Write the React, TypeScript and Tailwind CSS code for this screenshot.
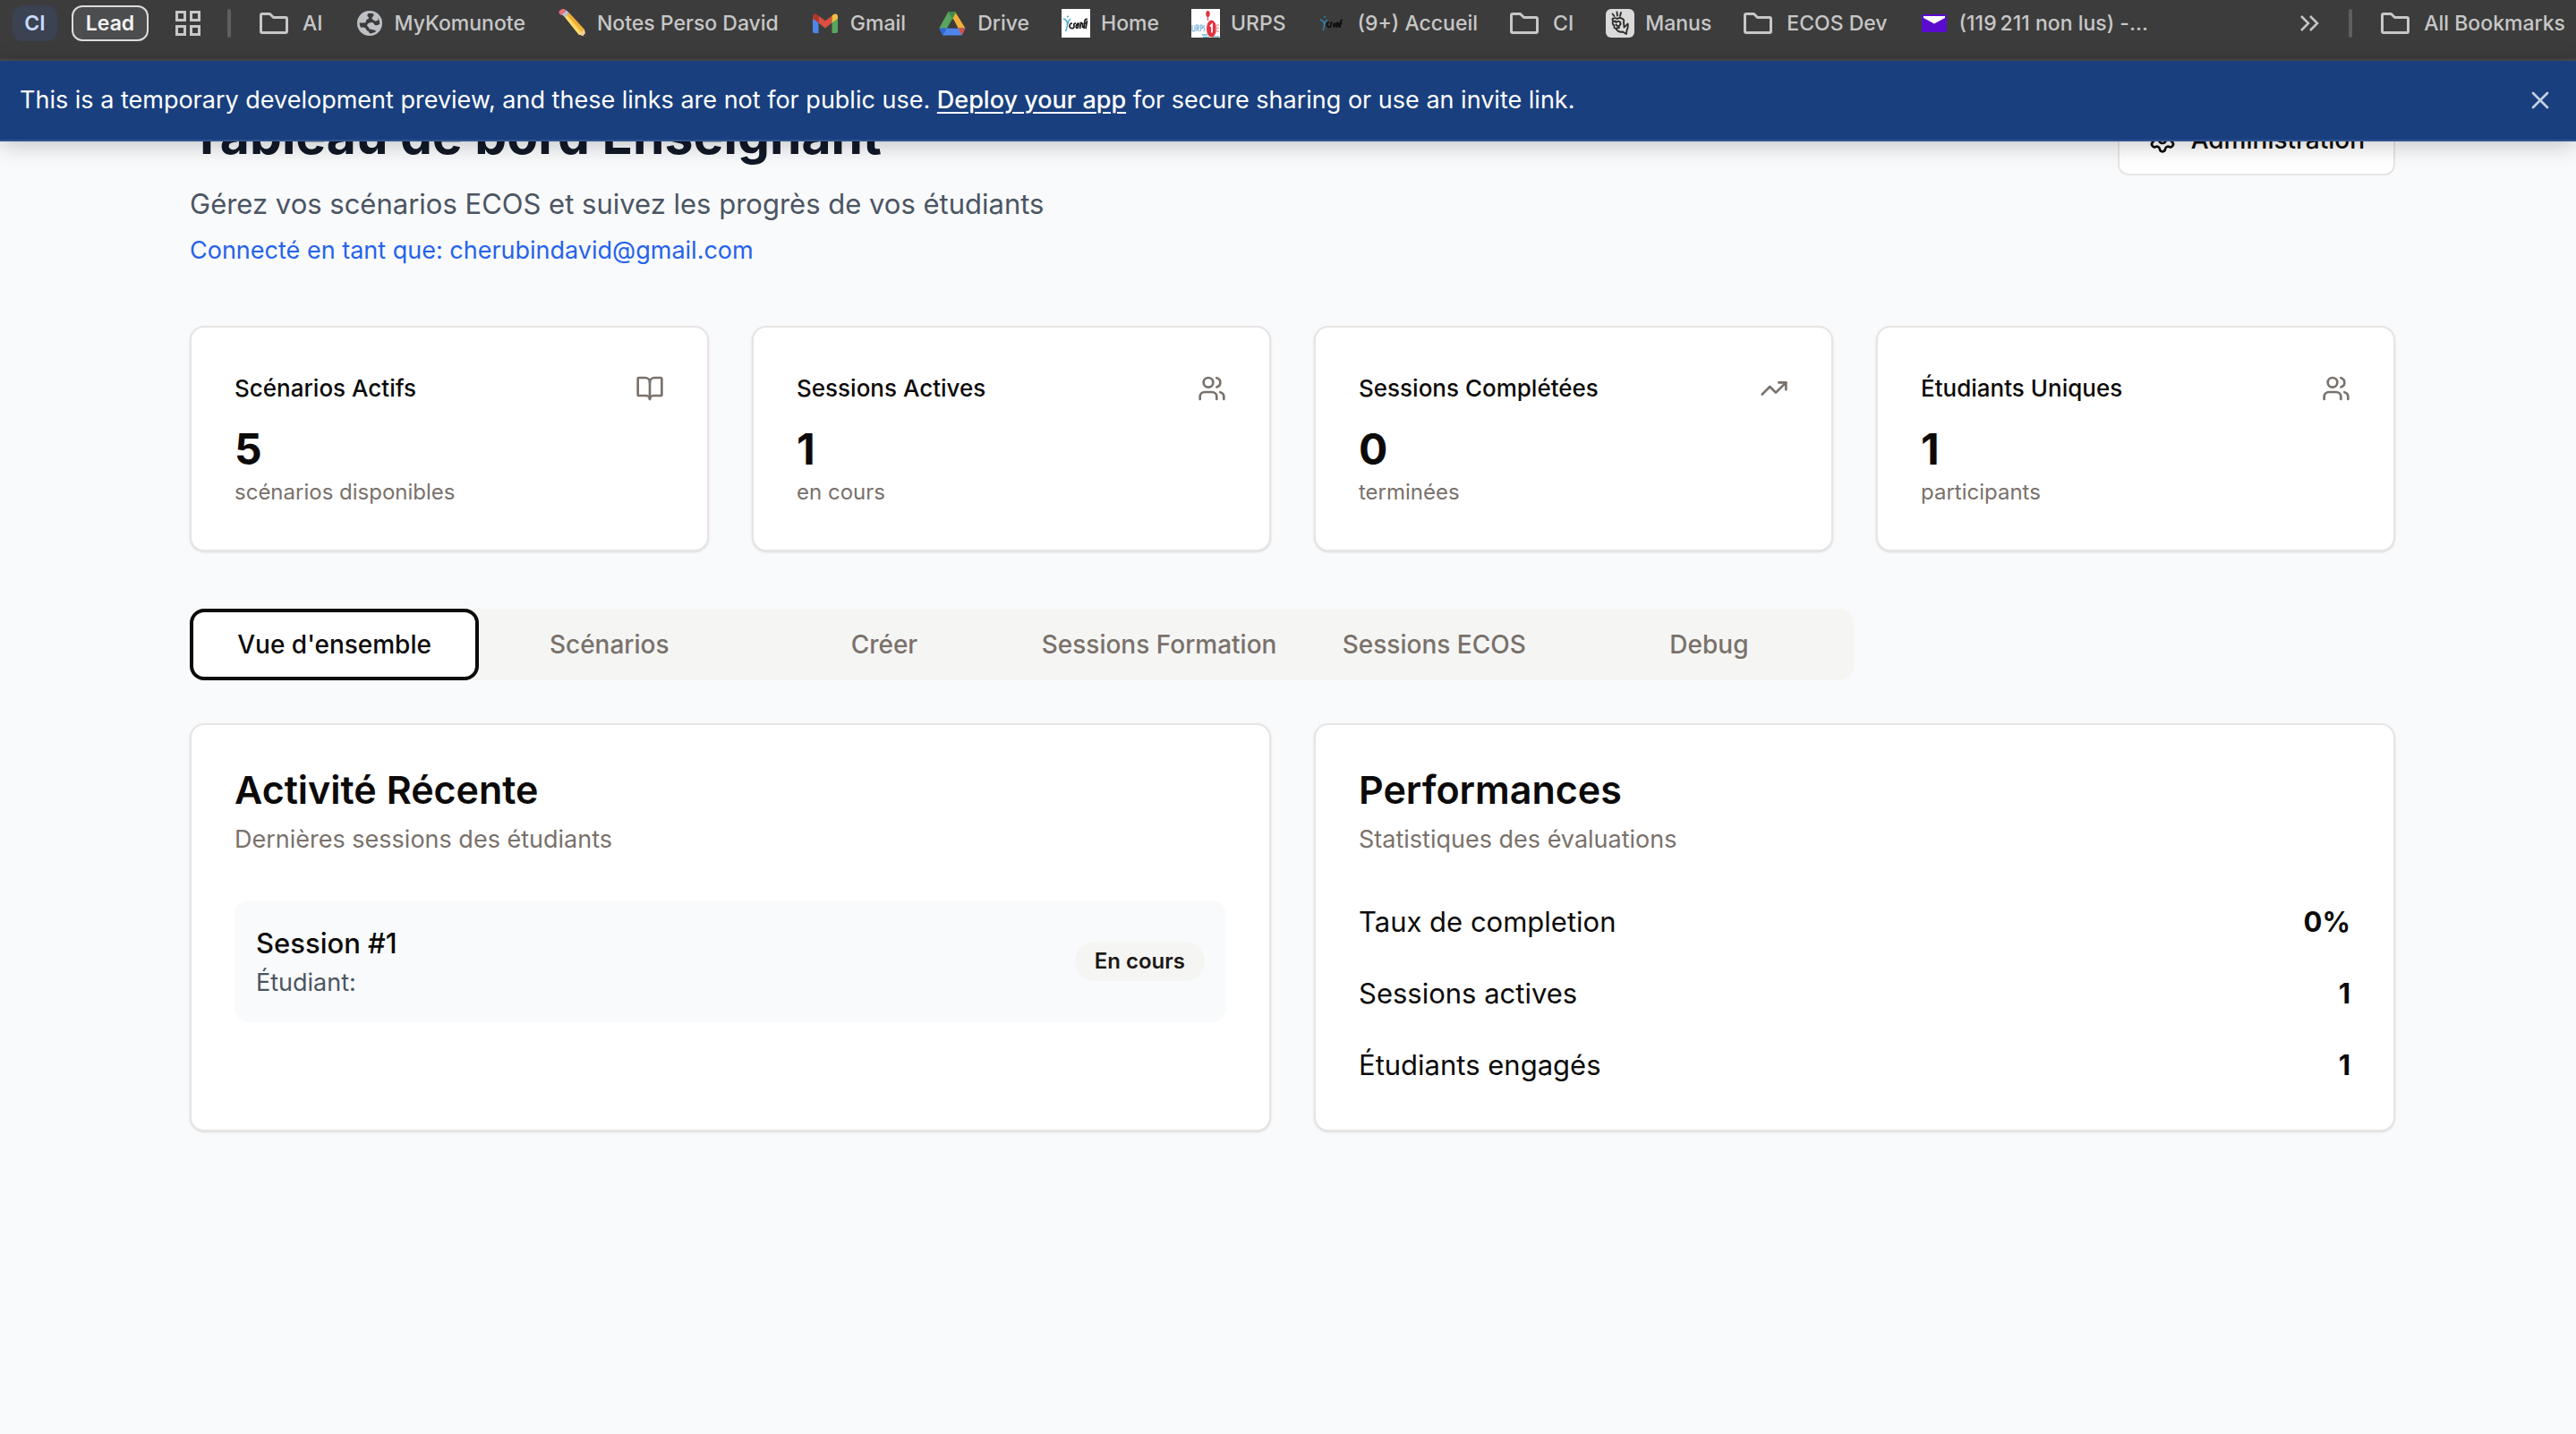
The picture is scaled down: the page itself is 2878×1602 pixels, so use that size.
import type { ReactNode } from "react";
import { BookOpen, Settings, TrendingUp, Users, X } from "lucide-react";

const folderIcon = (
  <svg viewBox="0 0 32 32" className="size-8" fill="none" stroke="#c7c7c7" strokeWidth="3" strokeLinejoin="round" aria-hidden="true">
    <path d="M3 5.500H11.500L15.500 9.500H29Q30.500 9.500 30.500 11V25Q30.500 26.500 29 26.500H3Q1.500 26.500 1.500 25V7Q1.500 5.500 3 5.500Z" />
  </svg>
);

const globeIcon = (
  <svg viewBox="0 0 32 32" className="size-8" aria-hidden="true">
    <circle cx="16" cy="16" r="14" fill="#bdc1c6" />
    <path d="M14.500 5Q12.500 7 14 8.500Q16 10 14 11.500Q11.500 12 12 14Q11.500 16 8.500 15.500H4.600Q4.500 18 6 20.800Q9 20 11.500 21.500Q12 24 14.500 24.800Q15.500 27.500 17 27.400Q21 27.200 23.500 24.800Q22 23.500 19 23Q15 23 14.500 20Q12 18.500 14 16.500Q17 14 20 15.500Q21 18.500 24 18.300Q26 18 27.400 16.500Q27.300 13 25.500 10.300Q23 12.500 20.500 12Q17.500 11.500 19 9Q21 8 20.500 5.500Q17.500 4.200 14.500 5Z" fill="#3c3c3c" />
    <path d="M21 7Q24.500 8.500 26 12Q23 14.500 20.500 12.500Q18.500 10.500 21 7Z" fill="#bdc1c6" />
  </svg>
);

const pencilIcon = (
  <svg viewBox="0 0 32 32" className="size-8" aria-hidden="true">
    <path d="M8 9 13 4.500 30 23 30.500 30.500 23.500 28.500Z" fill="#f6c443" />
    <path d="M10.500 6.800 13 4.500 30 23 27.500 25Z" fill="#e79b2e" opacity=".55" />
    <path d="M8 9 10 7.200 26 26.500 23.500 28.500Z" fill="#fbdc6b" />
    <path d="M23.500 28.500 30 23 31.500 31Z" fill="#f0cfa0" />
    <path d="M28.500 29.800 31 27.500 31.500 31.500Z" fill="#2b2b2b" />
    <path d="M4.500 6 9.500 1.200 13 4.500 8 9.200Z" fill="#b9c4cc" />
    <path d="M1.500 4.500Q1 2.500 3.500 1Q6-.8 8 .5L9.500 2 4.500 7Q2.500 6.500 1.500 4.500Z" fill="#e8707c" />
  </svg>
);

const gmailIcon = (
  <svg viewBox="0 0 32 32" className="size-8" aria-hidden="true">
    <path d="M2 10V25Q2 27 4 27H8.500V14Z" fill="#4f86ec" />
    <path d="M30 10V25Q30 27 28 27H23.500V14Z" fill="#58a55c" />
    <path d="M8.500 7.500 16 13.300 23.500 7.500V15.500L16 21.500 8.500 15.500Z" fill="#d95040" />
    <path d="M2 8.500Q2 5.500 5 5.500Q6.300 5.500 8.500 7.500V15.500L2 10.800Z" fill="#b5362a" />
    <path d="M30 8.500Q30 5.500 27 5.500Q25.700 5.500 23.500 7.500V15.500L30 10.800Z" fill="#f2be42" />
  </svg>
);

const driveIcon = (
  <svg viewBox="0 0 32 32" className="size-8" aria-hidden="true">
    <path d="M11.500 3H16L18.500 8.500 7 30 1.500 21Z" fill="#58a55c" />
    <path d="M13 3H19L30.500 21.500H22.500Z" fill="#f1b13b" />
    <path d="M11.500 3H20.500L16 11Z" fill="#3f8b4c" />
    <path d="M1.500 21.500H30.500L27 29Q26.500 29.500 25.500 29.500H6.500Q5.500 29.500 5 29Z" fill="#4f86ec" />
    <path d="M1.500 21.500H10L5.500 29.500Z" fill="#3267d3" />
    <path d="M22.500 21.500H30.500L26.500 29.500Z" fill="#d95040" />
    <path d="M16 11 22 21.500H10Z" fill="#3c3c3c" />
  </svg>
);

const homeIcon = (
  <svg viewBox="0 0 32 32" className="size-8" aria-hidden="true">
    <path d="M0 0H32V32H0Z" fill="#fff" />
    <path d="M2 11Q6 12 6.500 16Q7 20 4.500 25M10 11Q7.500 13 6.800 17" stroke="#3f9fd8" strokeWidth="1.400" fill="none" />
    <circle cx="7" cy="8.500" r="1" fill="#3f9fd8" />
    <path d="M12 16Q9 16 9 19Q9 22 12.500 21.500M16 16Q13 16 14 19Q14 22 11.800 21.500M17 17Q15 22 18 21Q19.500 18 19 16Q17 16 17 19M20.500 22 21.500 15.500Q24 15 23.500 21M25 22 26 13Q26.500 11 29 11.500M24.500 16H28M27 22 28.500 13" stroke="#1c1c1c" strokeWidth="1.700" fill="none" />
  </svg>
);

const urpsIcon = (
  <svg viewBox="0 0 32 32" className="size-8" aria-hidden="true">
    <path d="M0 0H32V32H0Z" fill="#fff" />
    <path d="M1 18V24Q3 26 4 24V18M6 25V18Q9 18 8.500 21H6.500L9 25M10.500 25V18Q13 18 12.500 21.500H10.500M15 18Q12.500 20 14.500 21.500Q16 24 13.500 25" stroke="#8dbbe0" strokeWidth="1.300" fill="none" />
    <path d="M12 29H18M13 31.500H20M23 31H31" stroke="#6fb7c6" strokeWidth="1.600" />
    <ellipse cx="18.500" cy="5.500" rx="2.200" ry="3.500" fill="#dc3340" />
    <path d="M18.500 9V13" stroke="#dc3340" />
    <ellipse cx="22.500" cy="22" rx="5.500" ry="9.500" fill="#e4323f" />
    <path d="M21 19.500 23 17.500V26.500" stroke="#fff" strokeWidth="1.800" fill="none" />
    <path d="M28 18H31M28 21.500H31M28 25H31M28 18V25" stroke="#efa7a9" strokeWidth="1.400" fill="none" />
  </svg>
);

const accueilIcon = (
  <svg viewBox="0 0 32 32" className="size-8" aria-hidden="true">
    <path d="M2 12Q6 13 6.500 17Q7 20 5 24M10 12Q7.500 14 6.800 17M7 8V10" stroke="#3585b5" strokeWidth="1.400" fill="none" />
    <path d="M12 15Q9 15 9.500 18Q10 20.500 12.500 20M16 15Q13 15 14 17.500Q14 20.500 12 20M17.500 16Q16 20 18 20Q19.500 18 19 15.500M20.500 21 21 15.500Q23 15 22.500 20M24 21 25 13.500Q25.500 12 27 12.500M23.500 16H26.500" stroke="#0e0e0e" strokeWidth="1.700" fill="none" />
  </svg>
);

const manusIcon = (
  <svg viewBox="0 0 32 32" className="size-8" aria-hidden="true">
    <rect width="32" height="32" rx="6" fill="#dadada" />
    <g stroke="#2e2e2a" strokeWidth="1.900" fill="none" strokeLinecap="round" strokeLinejoin="round">
      <path d="M7.500 5.500 9.500 8M12.500 3.500 13 7.500M17 4 16 8" />
      <path d="M8 13Q6.500 10.500 9 10.500Q11 9.500 13 11Q16 9 18.500 11Q21 11.500 20 15.500Q20.500 18 20.500 20.500Q23.500 18 24.500 16.500Q25.500 19 23.500 24L23 28 19 25.500Q14 26.500 11.500 22Q8.500 21.500 9.500 18.500Q7 17.500 8 13Z" />
      <path d="M11.500 15Q14 13 16 14.500Q17.500 17 15 19Q12.500 19.500 11.500 17.500M9.500 14 11 13.500M12 21.500 15 21" />
    </g>
  </svg>
);

const mailIcon = (
  <svg viewBox="0 0 32 32" className="size-8" aria-hidden="true">
    <rect x="2" y="6" width="28" height="20" rx="1" fill="#5b0bce" />
    <path d="M4 8H28V10L16 16.500 4 10Z" fill="#fff" />
  </svg>
);

const bookmarks: { label: string; icon: ReactNode; folder?: boolean }[] = [
  { label: "AI", icon: folderIcon, folder: true },
  { label: "MyKomunote", icon: globeIcon },
  { label: "Notes Perso David", icon: pencilIcon },
  { label: "Gmail", icon: gmailIcon },
  { label: "Drive", icon: driveIcon },
  { label: "Home", icon: homeIcon },
  { label: "URPS", icon: urpsIcon },
  { label: "(9+) Accueil", icon: accueilIcon },
  { label: "CI", icon: folderIcon, folder: true },
  { label: "Manus", icon: manusIcon },
  { label: "ECOS Dev", icon: folderIcon, folder: true },
  { label: "(119\u2009211 non lus) -...", icon: mailIcon },
];

const stats = [
  { label: "Scénarios Actifs", value: "5", note: "scénarios disponibles", Icon: BookOpen },
  { label: "Sessions Actives", value: "1", note: "en cours", Icon: Users },
  { label: "Sessions Complétées", value: "0", note: "terminées", Icon: TrendingUp },
  { label: "Étudiants Uniques", value: "1", note: "participants", Icon: Users },
];

const tabs = ["Vue d'ensemble", "Scénarios", "Créer", "Sessions Formation", "Sessions ECOS", "Debug"];

const performances = [
  { label: "Taux de completion", value: "0%" },
  { label: "Sessions actives", value: "1" },
  { label: "Étudiants engagés", value: "1" },
];

function Bookmark({ label, icon, folder }: { label: string; icon: ReactNode; folder?: boolean }) {
  return (
    <a href="#" className={folder ? "flex shrink-0 items-center gap-4" : "flex shrink-0 items-center gap-3"}>
      {icon}
      <span>{label}</span>
    </a>
  );
}

function BookmarkBar() {
  return (
    <nav aria-label="Bookmarks" className="flex h-[68px] items-start border-b-2 border-[#4a4a4a] bg-[#3c3c3c] pt-1.5 pr-3 pl-3.5 text-[23px] font-medium whitespace-nowrap text-[#c7c7c7]">
      <div className="flex h-10 w-full items-center">
        <button type="button" className="h-10 w-[50px] rounded-xl bg-[#3b4252] font-semibold text-[#c9d9fb]">CI</button>
        <button type="button" className="ml-4 h-10 w-[86px] rounded-xl border-2 border-[#dcdcdc] bg-[#4c4d4f] font-semibold text-[#f3f3f3]">Lead</button>
        <button type="button" aria-label="Apps" className="ml-7">
          <svg viewBox="0 0 32 32" className="size-8" fill="none" stroke="#c7c7c7" strokeWidth="3" aria-hidden="true">
            <path d="M3.500 3.500H12.500V12.500H3.500ZM19.500 3.500H28.500V12.500H19.500ZM3.500 19.500H12.500V28.500H3.500ZM19.500 19.500H28.500V28.500H19.500Z" />
          </svg>
        </button>
        <span className="ml-7 h-8 w-1 rounded-full bg-[#5f5f5f]" />
        <div className="ml-8 flex items-center gap-9">
          {bookmarks.map((b) => (
            <Bookmark key={b.label} {...b} />
          ))}
        </div>
        <button type="button" aria-label="More bookmarks" className="ml-auto">
          <svg viewBox="0 0 24 24" className="size-6" fill="none" stroke="#c7c7c7" strokeWidth="2.500" aria-hidden="true">
            <path d="M3 4 11 12 3 20M13 4 21 12 13 20" />
          </svg>
        </button>
        <span className="mx-8 h-8 w-1 rounded-full bg-[#5f5f5f]" />
        <Bookmark label="All Bookmarks" icon={folderIcon} folder />
      </div>
    </nav>
  );
}

function PreviewBanner() {
  return (
    <div className="absolute inset-x-0 top-0 z-10 flex h-[90px] items-center justify-between border-b-2 border-[#2f5491] bg-[#193f7e] pr-6 pl-[22px] text-[27px] text-white shadow-[0_4px_24px_rgba(0,0,0,0.22)]">
      <p>
        This is a temporary development preview, and these links are not for public use.{" "}
        <a href="#" className="font-medium underline decoration-2 underline-offset-4">Deploy your app</a> for secure sharing or use an invite link.
      </p>
      <button type="button" aria-label="Close" className="text-[#c3cfe2]">
        <X className="size-8" strokeWidth={2} />
      </button>
    </div>
  );
}

function Panel({ title, description, children }: { title: string; description: string; children: ReactNode }) {
  return (
    <section className="rounded-2xl border-2 border-stone-200 bg-white p-12 shadow-sm">
      <h2 className="text-[43px] leading-12 font-semibold">{title}</h2>
      <p className="mt-3 text-[27px] leading-10 text-stone-500">{description}</p>
      <div className="mt-12">{children}</div>
    </section>
  );
}

export default function App() {
  return (
    <div className="min-h-screen bg-[#f9fafb] font-['Inter',sans-serif] text-stone-950">
      <BookmarkBar />
      <div className="relative">
        <PreviewBanner />
        <main className="pt-12 pr-[202px] pb-12 pl-[212px]">
          <header className="flex items-start justify-between">
            <div>
              <h1 className="text-[57px] leading-[72px] font-bold text-[#111827]">Tableau de bord Enseignant</h1>
              <p className="mt-4 text-[31px] leading-12 text-[#4b5563]">Gérez vos scénarios ECOS et suivez les progrès de vos étudiants</p>
              <p className="mt-2 text-[27px] leading-10 text-[#2563eb]">Connecté en tant que: cherubindavid@gmail.com</p>
            </div>
            <button type="button" className="flex h-20 items-center gap-4 rounded-xl border-2 border-stone-200 bg-white px-8 text-[28px] leading-10 font-medium">
              <Settings className="size-8" aria-hidden="true" />
              Administration
            </button>
          </header>

          <section aria-label="Statistiques" className="mt-16 grid grid-cols-4 gap-12">
            {stats.map(({ label, value, note, Icon }) => (
              <article key={label} className="rounded-2xl border-2 border-stone-200 bg-white p-12 shadow-sm">
                <div className="flex items-center justify-between">
                  <h3 className="text-[26px] leading-10 font-medium">{label}</h3>
                  <Icon className="size-8 text-stone-500" aria-hidden="true" />
                </div>
                <p className="mt-4 text-5xl leading-16 font-bold">{value}</p>
                <p className="text-2xl leading-8 text-stone-500">{note}</p>
              </article>
            ))}
          </section>

          <div role="tablist" className="mt-16 grid w-full max-w-[1859px] grid-cols-6 rounded-2xl bg-stone-100 p-2 text-[28px] leading-10 font-medium whitespace-nowrap text-stone-500">
            {tabs.map((tab, i) => (
              <button
                key={tab}
                type="button"
                role="tab"
                aria-selected={i === 0}
                className={
                  i === 0
                    ? "rounded-lg bg-white px-5 py-3 text-stone-950 ring-4 ring-stone-950 ring-offset-4 ring-offset-white"
                    : "rounded-lg px-5 py-3"
                }
              >
                {tab}
              </button>
            ))}
          </div>

          <div className="mt-12 grid grid-cols-2 gap-12">
            <Panel title="Activité Récente" description="Dernières sessions des étudiants">
              <div className="flex items-center justify-between rounded-2xl bg-[#f9fafb] p-6">
                <div>
                  <p className="text-[31px] leading-12 font-medium">Session #1</p>
                  <p className="text-[27px] leading-10 text-[#4b5563]">Étudiant:</p>
                </div>
                <span className="rounded-full bg-stone-100 px-[22px] py-1.5 text-2xl leading-8 font-semibold text-stone-900">En cours</span>
              </div>
            </Panel>
            <Panel title="Performances" description="Statistiques des évaluations">
              <dl className="flex flex-col gap-8 text-[31px] leading-12">
                {performances.map(({ label, value }) => (
                  <div key={label} className="flex items-center justify-between">
                    <dt>{label}</dt>
                    <dd className="font-bold">{value}</dd>
                  </div>
                ))}
              </dl>
            </Panel>
          </div>
        </main>
      </div>
    </div>
  );
}
